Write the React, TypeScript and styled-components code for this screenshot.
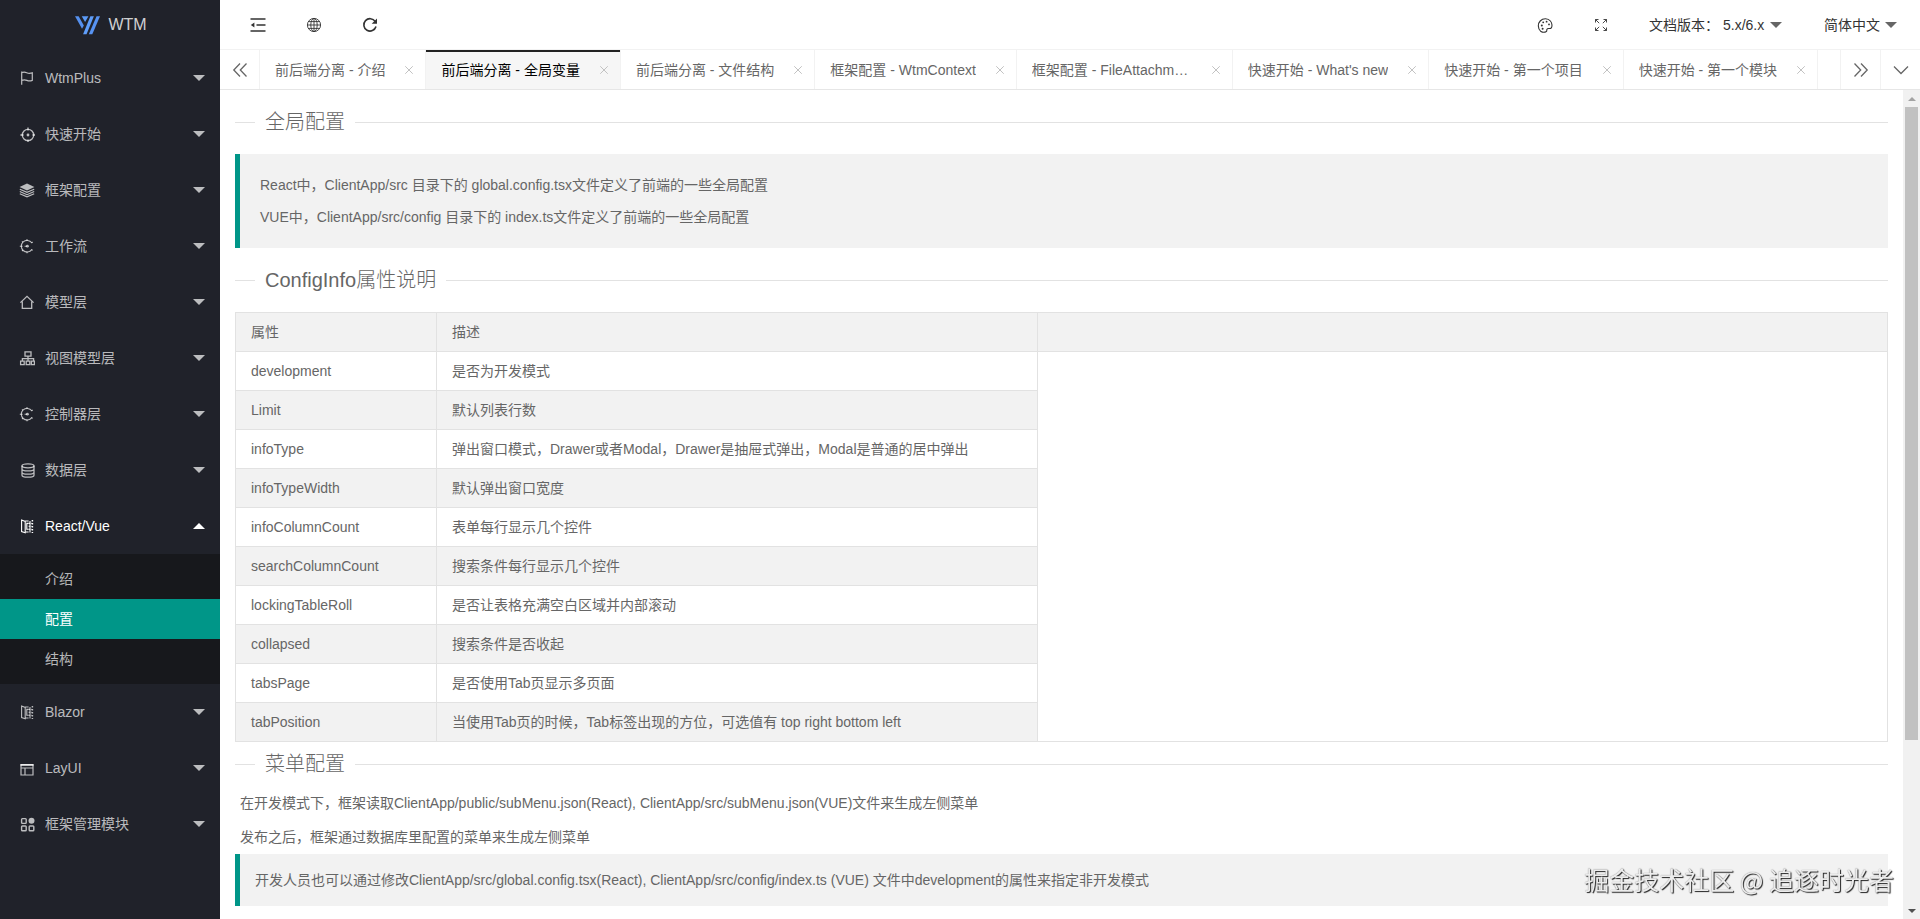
import React from 'react';
import styled, { createGlobalStyle, css } from 'styled-components';

const GlobalStyle = createGlobalStyle`
  *, *::before, *::after { box-sizing: border-box; }
  html, body, #root { height: 100%; margin: 0; }
  body {
    font-family: "Liberation Sans", Arial, "Noto Sans CJK SC", sans-serif;
    font-size: 14px;
    line-height: 24px;
    color: #666;
    background: #fff;
  }
  button, select {
    font: inherit;
    color: inherit;
    background: none;
    border: 0;
    padding: 0;
    cursor: pointer;
  }
  a { color: inherit; text-decoration: none; }
  h1, h2, p, ul { margin: 0; padding: 0; font-weight: inherit; }
  ul { list-style: none; }
  svg { display: block; flex: none; }
`;

const teal = '#009688';

/* ---------- shell ---------- */

const Shell = styled.div`
  display: flex;
  height: 100vh;
  overflow: hidden;
`;

const Sidebar = styled.aside`
  flex: none;
  width: 220px;
  background: #20222a;
  color: rgba(255, 255, 255, 0.7);
`;

const Main = styled.div`
  flex: 1;
  min-width: 0;
  display: flex;
  flex-direction: column;
`;

/* ---------- sidebar ---------- */

const Brand = styled.h1`
  display: flex;
  align-items: center;
  justify-content: center;
  gap: 8px;
  height: 50px;
  padding-left: 2px;
  font-size: 16px;
  color: rgba(255, 255, 255, 0.8);
`;

const MenuButton = styled.button<{ $open?: boolean }>`
  display: flex;
  align-items: center;
  width: 100%;
  height: 56px;
  padding: 0 15px 0 19px;
  text-align: left;
  color: ${(p) => (p.$open ? '#fff' : 'inherit')};
`;

const MenuLabel = styled.span`
  flex: 1;
  padding-left: 10px;
`;

const SubMenu = styled.ul`
  padding: 5px 0;
  background: #17181c;
`;

const SubLink = styled.a<{ $active?: boolean }>`
  display: block;
  padding-left: 45px;
  line-height: 40px;
  ${(p) => p.$active && css`
    background: ${teal};
    color: #fff;
  `}
`;

/* ---------- header ---------- */

const Header = styled.header`
  flex: none;
  display: flex;
  justify-content: space-between;
  height: 50px;
  border-bottom: 1px solid #f2f2f2;
  color: #333;
`;

const HeaderGroup = styled.div<{ $end?: boolean }>`
  display: flex;
  align-items: center;
  padding: ${(p) => (p.$end ? '0 23px 0 0' : '0 0 0 10px')};
`;

const ToolButton = styled.button`
  display: flex;
  align-items: center;
  justify-content: center;
  width: 56px;
  height: 50px;
`;

const Picker = styled.label`
  display: flex;
  align-items: center;
  padding-left: 20px;
  & + & { padding-left: 42px; }
`;

const PickerSelect = styled.select`
  appearance: none;
  outline: 0;
  margin-right: 5px;
`;

/* ---------- tabs ---------- */

const TabBar = styled.div`
  flex: none;
  display: flex;
  height: 40px;
  border-bottom: 1px solid #e6e6e6;
`;

const TabControl = styled.button<{ $side: 'left' | 'right' }>`
  flex: none;
  display: flex;
  align-items: center;
  justify-content: center;
  width: 40px;
  border-${(p) => (p.$side === 'left' ? 'right' : 'left')}: 1px solid #f2f2f2;
`;

const TabList = styled.ul`
  flex: 1;
  min-width: 0;
  display: flex;
  overflow: hidden;
`;

const Tab = styled.li<{ $active?: boolean }>`
  flex: none;
  display: flex;
  align-items: center;
  padding: 0 8px 0 15px;
  border-right: 1px solid #f2f2f2;
  ${(p) => p.$active && css`
    background: #f6f6f6;
    color: #000;
    box-shadow: inset 0 2px #222;
  `}
`;

const TabLink = styled.a`
  max-width: 160px;
  overflow: hidden;
  text-overflow: ellipsis;
  white-space: nowrap;
`;

const TabClose = styled.button`
  display: flex;
  align-items: center;
  justify-content: center;
  width: 16px;
  height: 16px;
  margin-left: 16px;
  color: #c2c2c2;
`;

/* ---------- content ---------- */

const Viewport = styled.div`
  flex: 1;
  min-height: 0;
  display: flex;
`;

const Content = styled.main`
  flex: 1;
  min-width: 0;
  padding: 0 15px;
  overflow: hidden;
`;

const Title = styled.h2<{ $compact?: boolean }>`
  display: flex;
  align-items: center;
  gap: 10px;
  height: ${(p) => (p.$compact ? 44 : 64)}px;
  font-size: 20px;
  font-weight: 300;
  &::before, &::after {
    content: "";
    height: 2px;
    border-bottom: 1px solid #e2e2e2;
  }
  &::before { width: 20px; }
  &::after { flex: 1; }
`;

const Quote = styled.blockquote`
  margin: 0;
  padding: 15px;
  border-left: 5px solid ${teal};
  background: #f2f2f2;
  line-height: 22px;
`;

const QuoteLine = styled.p`
  padding: 5px;
`;

const Paragraph = styled.p`
  padding: 5px;
`;

const DataTable = styled.table`
  width: 100%;
  table-layout: fixed;
  border-collapse: collapse;
  border: 1px solid #e2e2e2;
`;

const KeyCol = styled.col`
  width: 201px;
`;

const TextCol = styled.col`
  width: 601px;
`;

const cell = css`
  height: 39px;
  padding: 0 15px;
  border: 1px solid #e2e2e2;
  text-align: left;
  font-weight: 400;
`;

const HeadCell = styled.th`
  ${cell}
  background: #f2f2f2;
`;

const Cell = styled.td`
  ${cell}
  tr:nth-child(even) > & { background: #f2f2f2; }
`;

/* ---------- scroll bar ---------- */

const ScrollTrack = styled.div`
  flex: none;
  display: flex;
  flex-direction: column;
  width: 17px;
  background: #f1f1f1;
`;

const ScrollArrow = styled.button`
  display: flex;
  align-items: center;
  justify-content: center;
  height: 17px;
`;

const ScrollThumb = styled.div`
  flex: 39;
  margin: 0 2px;
  background: #c1c1c1;
`;

const ScrollRest = styled.div`
  flex: 10;
`;

const Watermark = styled.div`
  position: fixed;
  right: 26px;
  bottom: 22px;
  font-family: "Noto Sans CJK SC", sans-serif;
  font-size: 25px;
  line-height: 36px;
  color: #ececec;
  text-shadow: 1px 1px 1px #222, 0 0 1px #777;
  pointer-events: none;
`;

/* ---------- drawings ---------- */

const Triangle = ({ up, w = 12, h = 6, color = 'currentColor' }: { up?: boolean; w?: number; h?: number; color?: string }) => (
  <svg width={w} height={h} viewBox="0 0 12 6" preserveAspectRatio="none" fill={color} aria-hidden="true">
    <path d={up ? 'M0 6 6 0l6 6z' : 'M0 0h12L6 6z'} />
  </svg>
);

const Icon = ({ size = 16, sw = 1.2, children }: { size?: number; sw?: number; children: React.ReactNode }) => (
  <svg width={size} height={size} viewBox="0 0 16 16" fill="none" stroke="currentColor" strokeWidth={sw} aria-hidden="true">
    {children}
  </svg>
);

const dot = { fill: 'currentColor', stroke: 'none' };

const CircuitGlyph = (
  <Icon sw={1.1}>
    <path d="M12.8 4.8A5.800 5.800 0 1 0 12.800 11.600" />
    <path d="M.8 8.200h2.800M5.600 8.200h2.400M8 1.200v1.600M8 13.600v1.600M3 3.400l.9.9M3 13l.9-.9M12.400 5l1.300-1M12.400 11.400l1.300 1" />
    <circle cx="8.400" cy="8.200" r="1.400" {...dot} />
  </Icon>
);

const BookGlyph = (
  <Icon sw={1.1}>
    <path d="M2.600 2v11.600l3.600 1.200V3.400z" />
    <path d="M6.200 3h3.400M6.200 14h3.400M9.600 5.400H7.800v5.800h1.800M11 3v11.600" />
    <path d="M13.400 2v13" strokeDasharray="1.6 1.4" strokeWidth="1.500" />
    <path d="M9.600 5.400h3M9.600 8.300h3M9.600 11.200h3" strokeDasharray="1.4 .8" />
  </Icon>
);

const glyphs: Record<string, React.ReactNode> = {
  flag: (
    <Icon>
      <path d="M2.7 1.5v13.2M2.7 2.6c2-.8 3.4-.6 5 .1s3.300.9 5.600.1v7.600c-2 .8-3.800.7-5.400 0s-3.200-.8-5.200 0" />
    </Icon>
  ),
  target: (
    <Icon sw={1.3}>
      <circle cx="9" cy="9" r="5.700" />
      <path d="M9 1.400v3.200M9 13.400v2.600M1.400 9h3.200M13.400 9h2.600" />
      <circle cx="9" cy="9" r="1.400" {...dot} />
    </Icon>
  ),
  layers: (
    <Icon>
      <path d="M8 1.500 15.400 5 8 8.400.6 5z" {...dot} />
      <path d="M.8 7.200 8 10.400l7.200-3.200M.8 9.500 8 12.700l7.200-3.200M.8 11.800 8 14.800l7.200-3" />
    </Icon>
  ),
  circuit: CircuitGlyph,
  home: (
    <Icon sw={1.3}>
      <path d="M1.400 8.600 8 2.400l6.600 6.200M3.300 7.600v6.800h9.400V7.600" />
    </Icon>
  ),
  tree: (
    <Icon sw={1.3}>
      <path d="M6 1.800h6v4.400H6zM9 6.200v4.600M3.400 11V8.600h11.200V11M1.600 11.200h3.600v3.400H1.600zM7.200 11.200h3.600v3.400H7.200zM12.400 11.200h3v3.400h-3z" />
    </Icon>
  ),
  database: (
    <Icon sw={1.3}>
      <ellipse cx="9" cy="3.800" rx="6" ry="2" />
      <path d="M3 3.800v9.400c0 1.200 2.600 2 6 2s6-.8 6-2V3.800M3 7c0 1.200 2.600 1.900 6 1.900S15 8.200 15 7M3 10.200c0 1.200 2.600 1.900 6 1.900s6-.7 6-1.900" />
    </Icon>
  ),
  book: BookGlyph,
  layout: (
    <Icon sw={1.2}>
      <path d="M2 4.500h12v10.500H2zM2 8h12M6 8v7" />
      <path d="M1.500 4h13v2h-13z" {...dot} />
    </Icon>
  ),
  apps: (
    <Icon sw={1.400}>
      <rect x="2.600" y="2.600" width="4.600" height="4.800" rx=".8" />
      <rect x="2.600" y="10" width="4.600" height="4.800" rx=".8" />
      <rect x="10.200" y="10" width="4.600" height="4.800" rx=".8" />
      <circle cx="12.500" cy="4.800" r="3" {...dot} />
    </Icon>
  ),
};

const Logo = () => (
  <svg width="25" height="20" viewBox="0 0 26 20" aria-hidden="true">
    <path d="M0 1h3.800l5.400 9.500-1.900 3.300z" fill="#5590ee" />
    <path d="M7 1h7l-3.500 6z" fill="#5b9bf8" />
    <path d="M16 1h3.600L12 19.500H8.400z" fill="#5f9efa" />
    <path d="M22.400 1H26l-8 18.500h-3.600z" fill="#5793f2" />
  </svg>
);

/* ---------- data ---------- */

const menu = [
  { icon: 'flag', label: 'WtmPlus' },
  { icon: 'target', label: '快速开始' },
  { icon: 'layers', label: '框架配置' },
  { icon: 'circuit', label: '工作流' },
  { icon: 'home', label: '模型层' },
  { icon: 'tree', label: '视图模型层' },
  { icon: 'circuit', label: '控制器层' },
  { icon: 'database', label: '数据层' },
  { icon: 'book', label: 'React/Vue', children: ['介绍', '配置', '结构'] },
  { icon: 'book', label: 'Blazor' },
  { icon: 'layout', label: 'LayUI' },
  { icon: 'apps', label: '框架管理模块' },
];

const tabs = [
  '前后端分离 - 介绍',
  '前后端分离 - 全局变量',
  '前后端分离 - 文件结构',
  '框架配置 - WtmContext',
  '框架配置 - FileAttachment',
  "快速开始 - What's new",
  '快速开始 - 第一个项目',
  '快速开始 - 第一个模块',
];

const rows = [
  ['development', '是否为开发模式'],
  ['Limit', '默认列表行数'],
  ['infoType', '弹出窗口模式，Drawer或者Modal，Drawer是抽屉式弹出，Modal是普通的居中弹出'],
  ['infoTypeWidth', '默认弹出窗口宽度'],
  ['infoColumnCount', '表单每行显示几个控件'],
  ['searchColumnCount', '搜索条件每行显示几个控件'],
  ['lockingTableRoll', '是否让表格充满空白区域并内部滚动'],
  ['collapsed', '搜索条件是否收起'],
  ['tabsPage', '是否使用Tab页显示多页面'],
  ['tabPosition', '当使用Tab页的时候，Tab标签出现的方位，可选值有 top right bottom left'],
];

export default function App() {
  return (
    <>
      <GlobalStyle />
      <Shell>
        <Sidebar>
          <Brand><Logo />WTM</Brand>
          <nav>
            <ul>
              {menu.map((item) => (
                <li key={item.label}>
                  <MenuButton $open={!!item.children} aria-expanded={!!item.children}>
                    {glyphs[item.icon]}
                    <MenuLabel>{item.label}</MenuLabel>
                    <Triangle up={!!item.children} />
                  </MenuButton>
                  {item.children && (
                    <SubMenu>
                      {item.children.map((name) => (
                        <li key={name}><SubLink href="#" $active={name === '配置'}>{name}</SubLink></li>
                      ))}
                    </SubMenu>
                  )}
                </li>
              ))}
            </ul>
          </nav>
        </Sidebar>

        <Main>
          <Header>
            <HeaderGroup>
              <ToolButton aria-label="收起菜单">
                <Icon sw={1.5}>
                  <path d="M.5 2h15M6.500 8h9M.5 14h15" />
                  <path d="M.8 8 4.400 5.600v4.800z" {...dot} />
                </Icon>
              </ToolButton>
              <ToolButton aria-label="网站">
                <Icon sw={0.9}>
                  <circle cx="8" cy="8" r="6.600" />
                  <ellipse cx="8" cy="8" rx="3.200" ry="6.600" />
                  <path d="M8 1.400v13.200M1.400 8h13.200M2.400 4.600h11.200M2.400 11.400h11.200" />
                </Icon>
              </ToolButton>
              <ToolButton aria-label="刷新">
                <Icon sw={1.6}>
                  <path d="M13.200 4.400A6.200 6.200 0 1 0 14 9.600" />
                  <path d="M15 1.500v5.300H9.700z" {...dot} />
                </Icon>
              </ToolButton>
            </HeaderGroup>
            <HeaderGroup $end>
              <ToolButton aria-label="主题">
                <Icon sw={1.1}>
                  <path d="M3.600 14.200C.6 11.400.7 6.600 3.200 4 6.200.9 11 1.200 13.400 4c2 2.300 1.800 5.600.9 6.900-1 1.300-2.600.2-3.800.8-1.500.8-.1 2-1.200 2.800-1.500 1-4 .8-5.700-.3z" />
                  <circle cx="4.800" cy="8.600" r="1" {...dot} />
                  <circle cx="6.200" cy="5.300" r=".9" {...dot} />
                  <circle cx="9.600" cy="4.700" r=".9" {...dot} />
                  <circle cx="12" cy="7.400" r=".9" {...dot} />
                  <circle cx="5.600" cy="11.800" r="1" {...dot} />
                </Icon>
              </ToolButton>
              <ToolButton aria-label="全屏">
                <Icon sw={0.9}>
                  <path d="M2.500 5.500v-3h3M2.500 2.500l3.700 3.700M10.500 2.500h3v3M13.500 2.500 9.800 6.200M2.500 10.500v3h3M2.500 13.500l3.700-3.700M13.500 10.500v3h-3M13.500 13.500 9.800 9.800" />
                </Icon>
              </ToolButton>
              <Picker>
                文档版本：&nbsp;
                <PickerSelect><option>5.x/6.x</option></PickerSelect>
                <Triangle color="#666" />
              </Picker>
              <Picker>
                <PickerSelect aria-label="语言"><option>简体中文</option></PickerSelect>
                <Triangle color="#666" />
              </Picker>
            </HeaderGroup>
          </Header>

          <TabBar>
            <TabControl $side="left" aria-label="向左">
              <Icon sw={1.300}><path d="M8 1.500 1.800 8 8 14.500M14.500 1.500 8.300 8l6.200 6.500" /></Icon>
            </TabControl>
            <TabList>
              {tabs.map((name, i) => (
                <Tab key={name} $active={i === 1}>
                  <TabLink href="#">{name}</TabLink>
                  <TabClose aria-label="关闭">
                    <Icon size={10} sw={1.600}><path d="m2 2 12 12M14 2 2 14" /></Icon>
                  </TabClose>
                </Tab>
              ))}
            </TabList>
            <TabControl $side="right" aria-label="向右">
              <Icon sw={1.300}><path d="m8 1.500 6.200 6.500L8 14.500M1.500 1.500 7.700 8l-6.200 6.500" /></Icon>
            </TabControl>
            <TabControl $side="right" aria-label="更多">
              <Icon sw={1.300}><path d="m1 4.500 7 7 7-7" /></Icon>
            </TabControl>
          </TabBar>

          <Viewport>
            <Content>
              <Title>全局配置</Title>
              <Quote>
                <QuoteLine>React中，ClientApp/src 目录下的 global.config.tsx文件定义了前端的一些全局配置</QuoteLine>
                <QuoteLine>VUE中，ClientApp/src/config 目录下的 index.ts文件定义了前端的一些全局配置</QuoteLine>
              </Quote>
              <Title>ConfigInfo属性说明</Title>
              <DataTable>
                <colgroup><KeyCol /><TextCol /><col /></colgroup>
                <thead>
                  <tr><HeadCell>属性</HeadCell><HeadCell>描述</HeadCell><HeadCell /></tr>
                </thead>
                <tbody>
                  {rows.map(([key, text]) => (
                    <tr key={key}><Cell>{key}</Cell><Cell>{text}</Cell></tr>
                  ))}
                </tbody>
              </DataTable>
              <Title $compact>菜单配置</Title>
              <Paragraph>在开发模式下，框架读取ClientApp/public/subMenu.json(React), ClientApp/src/subMenu.json(VUE)文件来生成左侧菜单</Paragraph>
              <Paragraph>发布之后，框架通过数据库里配置的菜单来生成左侧菜单</Paragraph>
              <Quote>
                开发人员也可以通过修改ClientApp/src/global.config.tsx(React), ClientApp/src/config/index.ts (VUE) 文件中development的属性来指定非开发模式
              </Quote>
            </Content>
            <ScrollTrack>
              <ScrollArrow aria-label="向上滚动"><Triangle up w={8} h={4} color="#a3a3a3" /></ScrollArrow>
              <ScrollThumb />
              <ScrollRest />
              <ScrollArrow aria-label="向下滚动"><Triangle w={8} h={4} color="#505050" /></ScrollArrow>
            </ScrollTrack>
          </Viewport>
        </Main>
      </Shell>
      <Watermark>掘金技术社区 @ 追逐时光者</Watermark>
    </>
  );
}
